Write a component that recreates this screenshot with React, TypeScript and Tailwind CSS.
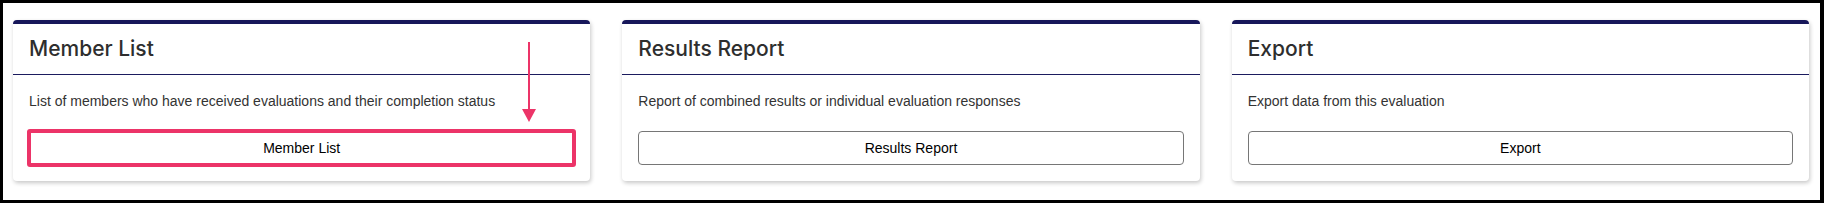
const cards = [
  {
    title: 'Member List',
    text: 'List of members who have received evaluations and their completion status',
    button: 'Member List',
    highlight: true,
  },
  {
    title: 'Results Report',
    text: 'Report of combined results or individual evaluation responses',
    button: 'Results Report',
  },
  {
    title: 'Export',
    text: 'Export data from this evaluation',
    button: 'Export',
  },
];

export default function App() {
  return (
    <div className="h-[203px] w-full border-[3px] border-r-4 border-black bg-white pl-[10px] pr-[11px] pt-[17px]">
      <div className="grid grid-cols-3 gap-[32px]">
        {cards.map((card) => (
          <div
            key={card.title}
            className="relative h-[161px] rounded-[4px] border-t-4 border-[#17175a] bg-white shadow-[1px_2px_4px_rgba(0,0,0,0.22)]"
          >
            <div className="flex h-[51px] items-center border-b border-[#1b1b5e] px-4">
              <h2 className="text-[21px] font-medium text-[#2e2e2e] [font-family:Inter,'Noto_Sans',sans-serif]">
                {card.title}
              </h2>
            </div>
            <div className="px-4 pb-4 pt-4 [font-family:'Liberation_Sans',Arial,sans-serif]">
              <p className="text-[14px] leading-5 text-[#333]">{card.text}</p>
              <div className="relative mt-5">
                <button className="h-[34px] w-full rounded-[4px] border border-[#767676] bg-white text-[14px] text-black">
                  {card.button}
                </button>
                {card.highlight && (
                  <div className="pointer-events-none absolute -inset-[2px] rounded-[3px] border-4 border-[#ec3468]" />
                )}
              </div>
            </div>
            {card.highlight && (
              <svg
                className="absolute right-[54px] top-[18px]"
                width="14"
                height="80"
                viewBox="0 0 14 80"
              >
                <rect x="6" y="0" width="2" height="68" fill="#ec3468" />
                <polygon points="0,67 14,67 7,80" fill="#ec3468" />
              </svg>
            )}
          </div>
        ))}
      </div>
    </div>
  );
}
